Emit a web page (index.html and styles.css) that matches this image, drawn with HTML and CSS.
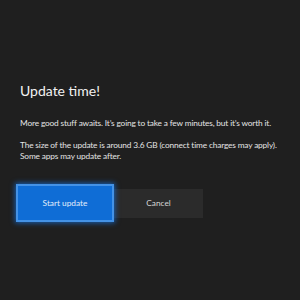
FILE: index.html
```html
<!DOCTYPE html>
<html lang="en">
<head>
    <meta charset="UTF-8">
    <meta name="viewport" content="width=device-width, initial-scale=1.0">
    <title>Update time!</title>
    <link rel="stylesheet" href="styles.css">
</head>
<body>
    <div class="update-dialog">
        <h2 class="update-title">Update time!</h2>
        <p class="update-text">More good stuff awaits. It’s going to take a few minutes, but it’s worth it.</p>
        <p class="update-text">The size of the update is around 3.6 GB (connect time charges may apply).<br>Some apps may update after.</p>
        <div class="update-actions">
            <button class="btn btn-primary">Start update</button>
            <button class="btn btn-secondary">Cancel</button>
        </div>
    </div>
</body>
</html>
```

FILE: styles.css
```css
html, body {
  margin: 0;
  height: 100%;
  background: #1f1f1f;
}

.update-dialog {
  padding: 82px 20px 0 20px;
  font-family: Lato, "Noto Sans", sans-serif;
  color: #e4e4e4;
}

.update-title {
  margin: 0 0 18px 0;
  font-size: 14px;
  font-weight: normal;
  line-height: 18px;
  color: #f2f2f2;
}

.update-text {
  margin: 0 0 11px 0;
  font-size: 8.3px;
  line-height: 11px;
  letter-spacing: -0.15px;
  white-space: nowrap;
}

.update-text + .update-text {
  margin-top: 11px;
}

.update-actions {
  display: flex;
  align-items: center;
  margin-top: 22px;
  margin-left: -4px;
}

.btn {
  font-family: inherit;
  font-size: 8.3px;
  border: none;
  padding: 0;
  margin: 0;
}

.btn-primary {
  width: 98px;
  height: 38px;
  background: #0f6dd6;
  border: 2px solid #4492e6;
  box-shadow: 0 0 5px 1px rgba(20, 115, 225, 0.75);
  color: #e3eefb;
  position: relative;
  z-index: 1;
}

.btn-secondary {
  width: 89px;
  height: 29px;
  background: #2b2b2b;
  color: #d6d6d6;
}
```
